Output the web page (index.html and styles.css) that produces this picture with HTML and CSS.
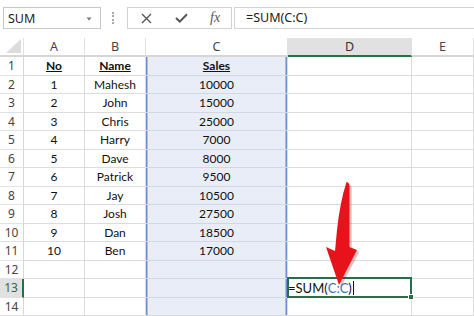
FILE: index.html
```html
<!DOCTYPE html>
<html>
<head>
<meta charset="utf-8">
<link rel="stylesheet" href="styles.css">
</head>
<body>
<div class="toolbar">
  <div class="namebox"><span class="nb-text">SUM</span><svg class="caret" width="6" height="4" viewBox="0 0 6 4"><path d="M0.5 0.5 L3 3.5 L5.5 0.5 Z" fill="#777"/></svg></div>
  <div class="grip"></div>
  <div class="icons">
    <svg class="ico-x" width="11" height="11" viewBox="0 0 11 11"><path d="M1 1 L10 10 M10 1 L1 10" stroke="#555" stroke-width="1.4" fill="none"/></svg>
    <svg class="ico-ok" width="13" height="10" viewBox="0 0 13 10"><path d="M1 5 L4.8 8.6 L12 1.2" stroke="#555" stroke-width="2" fill="none"/></svg>
    <span class="fx">fx</span>
  </div>
  <div class="formula">=SUM(C:C)</div>
</div>
<div class="sheet">
  <div class="h corner"><svg width="15" height="14" viewBox="0 0 15 14"><path d="M15 0 L15 14 L0 14 Z" fill="#dcdcdc"/></svg></div>
  <div class="h">A</div><div class="h">B</div><div class="h hc">C</div><div class="h hd">D</div><div class="h">E</div>

  <div class="rh">1</div><div class="c b">No</div><div class="c b">Name</div><div class="c s b">Sales</div><div class="c"></div><div class="c"></div>
  <div class="rh">2</div><div class="c">1</div><div class="c">Mahesh</div><div class="c s">10000</div><div class="c"></div><div class="c"></div>
  <div class="rh">3</div><div class="c">2</div><div class="c">John</div><div class="c s">15000</div><div class="c"></div><div class="c"></div>
  <div class="rh">4</div><div class="c">3</div><div class="c">Chris</div><div class="c s">25000</div><div class="c"></div><div class="c"></div>
  <div class="rh">5</div><div class="c">4</div><div class="c">Harry</div><div class="c s">7000</div><div class="c"></div><div class="c"></div>
  <div class="rh">6</div><div class="c">5</div><div class="c">Dave</div><div class="c s">8000</div><div class="c"></div><div class="c"></div>
  <div class="rh">7</div><div class="c">6</div><div class="c">Patrick</div><div class="c s">9500</div><div class="c"></div><div class="c"></div>
  <div class="rh">8</div><div class="c">7</div><div class="c">Jay</div><div class="c s">10500</div><div class="c"></div><div class="c"></div>
  <div class="rh">9</div><div class="c">8</div><div class="c">Josh</div><div class="c s">27500</div><div class="c"></div><div class="c"></div>
  <div class="rh">10</div><div class="c">9</div><div class="c">Dan</div><div class="c s">18500</div><div class="c"></div><div class="c"></div>
  <div class="rh">11</div><div class="c">10</div><div class="c">Ben</div><div class="c s">17000</div><div class="c"></div><div class="c"></div>
  <div class="rh">12</div><div class="c"></div><div class="c"></div><div class="c s"></div><div class="c"></div><div class="c"></div>
  <div class="rh ra">13</div><div class="c"></div><div class="c"></div><div class="c s"></div><div class="c active"><span>=SUM(</span><span class="ref">C:C</span><span>)</span><span class="cursor"></span><span class="handle"></span></div><div class="c"></div>
  <div class="rh">14</div><div class="c"></div><div class="c"></div><div class="c s"></div><div class="c"></div><div class="c"></div>
</div>
<svg class="arrow" width="474" height="316" viewBox="0 0 474 316">
  <path d="M347.5 183 C348.5 183 350.5 184 350.5 187 L350.5 248 L358 251 L340 286 L327 248 L336 252 L338 231 Q341 203 347.5 183 Z" fill="#7a1010" opacity="0.25" transform="translate(1.2 1)"/>
  <path d="M346.5 182 C347.5 182 349.5 183 349.5 186 L349.5 247 L357 250 L339 285 L326 247 L335 251 L337 230 Q340 202 346.5 182 Z" fill="#e8121a"/>
</svg>
</body>
</html>
```
FILE: styles.css
```css
html, body {
  margin: 0;
  padding: 0;
  background: #ffffff;
  width: 474px;
  height: 316px;
  overflow: hidden;
}
body {
  position: relative;
  font-family: "Noto Sans", "Open Sans", sans-serif;
}
.toolbar {
  height: 38px;
  box-sizing: border-box;
  padding: 7px 0 0 3px;
  display: flex;
  align-items: flex-start;
}
.namebox {
  width: 98px;
  height: 22px;
  box-sizing: border-box;
  border: 1px solid #c8c8c8;
  display: flex;
  align-items: center;
  justify-content: space-between;
  padding: 0 8px 0 4px;
}
.nb-text {
  font-size: 12.5px;
  color: #222;
}
.caret {
  margin-top: 1px;
}
.grip {
  width: 0;
  height: 12px;
  margin: 5px 0 0 11px;
  border-left: 2px dotted #a8a8a8;
}
.icons {
  width: 105px;
  height: 22px;
  box-sizing: border-box;
  margin-left: 13px;
  border: 1px solid #d2d2d2;
  display: flex;
  align-items: center;
  padding-left: 13px;
}
.ico-ok {
  margin-left: 23px;
}
.fx {
  margin-left: 22px;
  font-family: "Liberation Serif", serif;
  font-style: italic;
  font-size: 14px;
  color: #555;
}
.formula {
  flex: 1;
  height: 22px;
  box-sizing: border-box;
  margin-left: 2px;
  border: 1px solid #d2d2d2;
  border-right: none;
  padding-left: 11px;
  font-size: 12.5px;
  line-height: 20px;
  color: #222;
}
.sheet {
  display: grid;
  grid-template-columns: 24px 61px 61px 142px 124px 62px;
  grid-template-rows: 19px repeat(14, 18.5px);
}
.h {
  box-sizing: border-box;
  border-right: 1px solid #e0e0e0;
  border-bottom: 2px solid #d6d6d6;
  display: flex;
  align-items: center;
  justify-content: center;
  font-size: 12.5px;
  color: #444;
}
.corner {
  align-items: flex-end;
  justify-content: flex-end;
  padding: 0 2px 2px 0;
}
.corner svg {
  display: block;
}
.hc {
  box-shadow: inset 0 -2px 0 -1px #ffffff;
}
.hd {
  background: #e1e1e1;
  border-bottom-color: #217346;
  color: #333;
}
.rh {
  box-sizing: border-box;
  border-right: 1px solid #d6d6d6;
  border-bottom: 1px solid #e2e2e2;
  display: flex;
  align-items: center;
  justify-content: center;
  font-size: 12px;
  color: #444;
}
.ra {
  background: #e1e1e1;
  border-right: 2px solid #217346;
  color: #2f6a48;
}
.c {
  box-sizing: border-box;
  border-right: 1px solid #dcdcdc;
  border-bottom: 1px solid #dcdcdc;
  display: flex;
  align-items: center;
  justify-content: center;
  font-family: Lato, "Liberation Sans", sans-serif;
  font-size: 12px;
  color: #111;
}
.b {
  font-weight: bold;
  text-decoration: underline;
}
.s {
  background: #e8edf7;
  border-bottom-color: #d3d8e0;
  box-shadow: inset 1.5px 0 0 #6a8ecb, inset -1.5px 0 0 #6a8ecb;
}
.active {
  position: relative;
  justify-content: flex-start;
  font-size: 13px;
  color: #111;
}
.active::after {
  content: "";
  position: absolute;
  left: -1px;
  top: -2px;
  right: -1px;
  bottom: -1px;
  border: 2px solid #2a6e47;
}
.ref {
  color: #3a6ec4;
}
.cursor {
  width: 1px;
  height: 14px;
  background: #111;
  margin-left: 1px;
}
.handle {
  position: absolute;
  right: -3px;
  bottom: -3px;
  width: 4px;
  height: 4px;
  background: #2a6e47;
  border: 1px solid #fff;
  z-index: 2;
}
.arrow {
  position: absolute;
  left: 0;
  top: 0;
  pointer-events: none;
}
```
